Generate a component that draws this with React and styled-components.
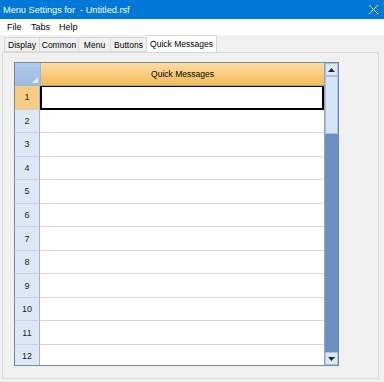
import styled, { createGlobalStyle } from "styled-components";

const Global = createGlobalStyle`
  html, body { margin: 0; padding: 0; background: #f0f0f0; }
  body { font-family: "Liberation Sans", Arial, sans-serif; }
`;

const Window = styled.div`
  width: 384px;
  height: 382px;
  display: flex;
  flex-direction: column;
  background: #f0f0f0;
  overflow: hidden;
  box-sizing: border-box;
`;

const TitleBar = styled.div`
  height: 19px;
  background: #0078d7;
  color: #fff;
  font-size: 9.2px;
  display: flex;
  align-items: center;
  justify-content: space-between;
  padding: 0 6px 0 3px;
`;

const CloseX = styled.svg`
  width: 9px;
  height: 9px;
`;

const MenuBar = styled.div`
  height: 16px;
  background: #fff;
  display: flex;
  align-items: center;
  padding: 0 0 0 7px;
  font-size: 9px;
  color: #000;
`;

const MenuItem = styled.span`
  width: ${({ w }) => w}px;
`;

const Body = styled.div`
  flex: 1;
  display: flex;
  flex-direction: column;
  padding: 2px 5px 3px 2px;
`;

const TabStrip = styled.div`
  display: flex;
  align-items: flex-end;
  height: 15px;
  padding-left: 2px;
`;

const Tab = styled.div`
  width: ${({ w }) => w}px;
  height: ${({ active }) => (active ? 17 : 15)}px;
  box-sizing: border-box;
  display: flex;
  align-items: center;
  justify-content: center;
  font-size: 8.5px;
  color: #000;
  background: ${({ active }) => (active ? "#fff" : "#f0f0f0")};
  border: 1px solid #d9d9d9;
  border-bottom: ${({ active }) => (active ? "none" : "1px solid #d9d9d9")};
  margin-right: -1px;
  position: relative;
  z-index: ${({ active }) => (active ? 1 : 0)};
`;

const Panel = styled.div`
  flex: 1;
  border: 1px solid #d9d9d9;
  background: #f0f0f0;
  padding: 9px 39px 0 11px;
  overflow: hidden;
`;

const Grid = styled.div`
  height: 304px;
  border: 1px solid #778899;
  background: #fff;
  display: flex;
  overflow: hidden;
  box-sizing: border-box;
`;

const Table = styled.div`
  flex: 1;
  display: flex;
  flex-direction: column;
  overflow: hidden;
`;

const HeaderRow = styled.div`
  display: flex;
  height: 23px;
  flex-shrink: 0;
`;

const Corner = styled.div`
  width: 25px;
  background: linear-gradient(#b1caec, #9dbbe5);
  border-right: 1px solid #9eb6ce;
  border-bottom: 1px solid #9eb6ce;
  position: relative;
  &::after {
    content: "";
    position: absolute;
    right: 2px;
    bottom: 2px;
    border-left: 6px solid transparent;
    border-bottom: 6px solid #e8eef8;
  }
`;

const ColHeader = styled.div`
  flex: 1;
  background: linear-gradient(#fcdda2, #f4bb5a);
  border-bottom: 1px solid #c5a467;
  font-size: 8.5px;
  display: flex;
  align-items: center;
  justify-content: center;
  color: #000;
`;

const Row = styled.div`
  display: flex;
  height: 23.55px;
  flex-shrink: 0;
`;

const RowHeader = styled.div`
  width: 25px;
  box-sizing: border-box;
  background: ${({ active }) => (active ? "#f8cd82" : "#dde7f5")};
  border-right: 1px solid #9eb6ce;
  border-bottom: 1px solid #c6d3e6;
  font-size: 9px;
  display: flex;
  align-items: center;
  justify-content: center;
  color: #1e1e1e;
`;

const Cell = styled.div`
  flex: 1;
  box-sizing: border-box;
  border-bottom: 1px solid #d0d7e5;
  ${({ active }) => active && "border: 2px solid #000; border-top-width: 1px;"}
`;

const ScrollBar = styled.div`
  width: 13px;
  display: flex;
  flex-direction: column;
  border-left: 1px solid #8ea7c6;
  background: #6b8fc3;
`;

const ScrollButton = styled.div`
  height: 13px;
  box-sizing: border-box;
  background: #dde8f7;
  border: 1px solid #a9bfdc;
  display: flex;
  align-items: center;
  justify-content: center;
`;

const Thumb = styled.div`
  height: 58px;
  box-sizing: border-box;
  background: #d6e4f7;
  border: 1px solid #a9bfdc;
`;

const Track = styled.div`
  flex: 1;
`;

const Arrow = ({ down }) => (
  <svg width="7" height="4" viewBox="0 0 7 4">
    <path d={down ? "M0 0h7L3.5 4z" : "M0 4h7L3.5 0z"} fill="#1d2a3a" />
  </svg>
);

const tabs = [
  { label: "Display", w: 36 },
  { label: "Common", w: 40 },
  { label: "Menu", w: 33 },
  { label: "Buttons", w: 37 },
  { label: "Quick Messages", w: 71 },
];
const rows = Array.from({ length: 12 }, (_, i) => i + 1);

export default function App() {
  return (
    <Window>
      <Global />
      <TitleBar>
        <span>Menu Settings for&nbsp; - Untitled.rsf</span>
        <CloseX viewBox="0 0 9 9">
          <path d="M0 0L9 9M9 0L0 9" stroke="#fff" strokeWidth="1" />
        </CloseX>
      </TitleBar>
      <MenuBar>
        <MenuItem w={24}>File</MenuItem>
        <MenuItem w={28}>Tabs</MenuItem>
        <MenuItem w={30}>Help</MenuItem>
      </MenuBar>
      <Body>
        <TabStrip>
          {tabs.map((t) => (
            <Tab key={t.label} w={t.w} active={t.label === "Quick Messages"}>
              {t.label}
            </Tab>
          ))}
        </TabStrip>
        <Panel>
          <Grid>
            <Table>
              <HeaderRow>
                <Corner />
                <ColHeader>Quick Messages</ColHeader>
              </HeaderRow>
              {rows.map((n) => (
                <Row key={n}>
                  <RowHeader active={n === 1}>{n}</RowHeader>
                  <Cell active={n === 1} />
                </Row>
              ))}
            </Table>
            <ScrollBar>
              <ScrollButton>
                <Arrow />
              </ScrollButton>
              <Thumb />
              <Track />
              <ScrollButton>
                <Arrow down />
              </ScrollButton>
            </ScrollBar>
          </Grid>
        </Panel>
      </Body>
    </Window>
  );
}
